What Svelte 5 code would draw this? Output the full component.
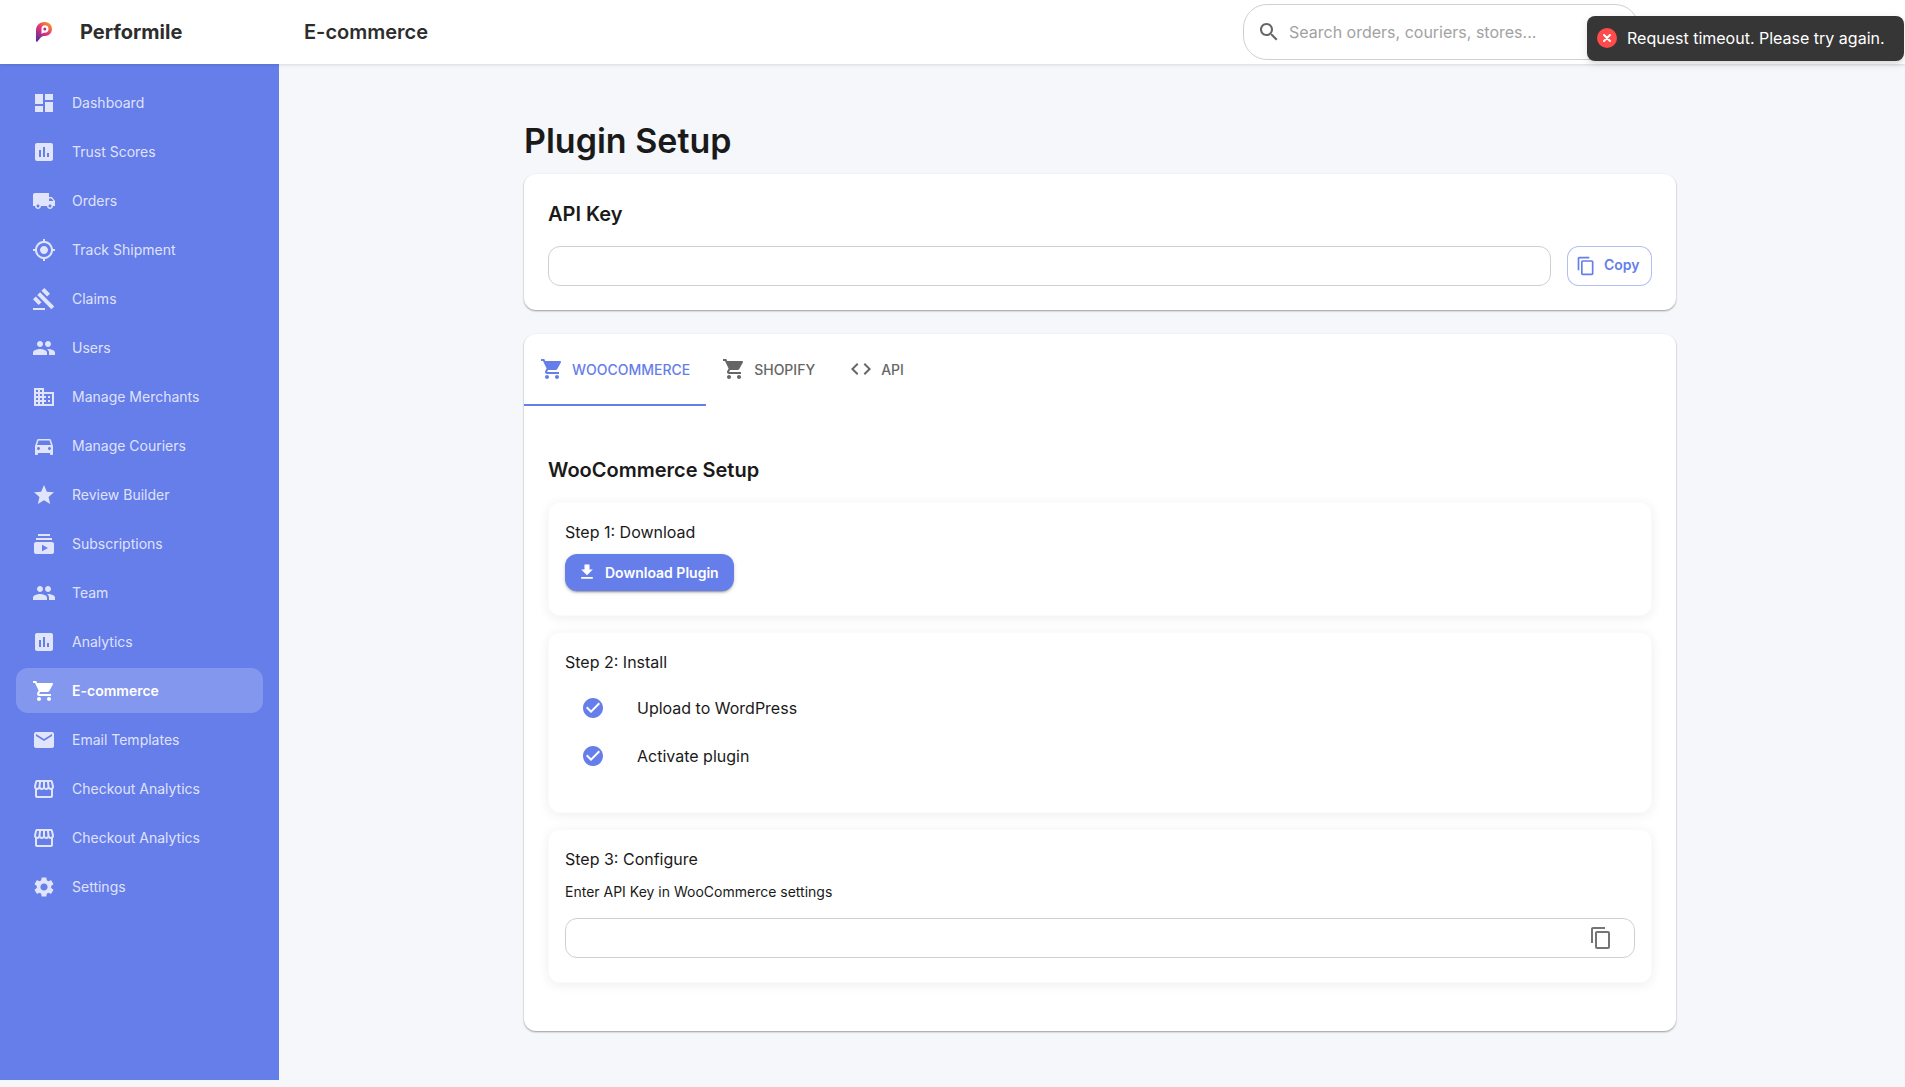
<script>
  const P = {
    dashboard: 'M3 13h8V3H3v10zm0 8h8v-6H3v6zm10 0h8V11h-8v10zm0-18v6h8V3h-8z',
    bar: 'M19 3H5c-1.1 0-2 .9-2 2v14c0 1.1.9 2 2 2h14c1.1 0 2-.9 2-2V5c0-1.1-.9-2-2-2zM9 17H7v-7h2v7zm4 0h-2V7h2v10zm4 0h-2v-4h2v4z',
    truck: 'M20 8h-3V4H3c-1.1 0-2 .9-2 2v11h2c0 1.66 1.34 3 3 3s3-1.34 3-3h6c0 1.66 1.34 3 3 3s3-1.34 3-3h2v-5l-3-4zM6 18.5c-.83 0-1.5-.67-1.5-1.5s.67-1.5 1.5-1.5 1.5.67 1.5 1.5-.67 1.5-1.5 1.5zm13.5-9 1.96 2.5H17V9.5h2.5zm-1.5 9c-.83 0-1.5-.67-1.5-1.5s.67-1.5 1.5-1.5 1.5.67 1.5 1.5-.67 1.5-1.5 1.5z',
    track: 'M12 8c-2.21 0-4 1.79-4 4s1.79 4 4 4 4-1.79 4-4-1.79-4-4-4zm8.94 3c-.46-4.17-3.77-7.48-7.94-7.94V1h-2v2.06C6.83 3.52 3.52 6.83 3.06 11H1v2h2.06c.46 4.17 3.77 7.48 7.94 7.94V23h2v-2.06c4.17-.46 7.48-3.77 7.94-7.94H23v-2h-2.06zM12 19c-3.87 0-7-3.13-7-7s3.13-7 7-7 7 3.13 7 7-3.13 7-7 7z',
    gavel: 'M1 21h12v2H1v-2zM5.245 8.07l2.83-2.827 14.14 14.142-2.828 2.828L5.245 8.07zM12.317 1l5.657 5.656-2.83 2.83-5.654-5.66L12.317 1zM3.825 9.485l5.657 5.657-2.828 2.828-5.657-5.657 2.828-2.828z',
    people: 'M16 11c1.66 0 2.99-1.34 2.99-3S17.66 5 16 5c-1.66 0-3 1.34-3 3s1.34 3 3 3zm-8 0c1.66 0 2.99-1.34 2.99-3S9.66 5 8 5C6.34 5 5 6.34 5 8s1.34 3 3 3zm0 2c-2.33 0-7 1.17-7 3.5V19h14v-2.5c0-2.33-4.67-3.5-7-3.5zm8 0c-.29 0-.62.02-.97.05 1.16.84 1.97 1.97 1.97 3.45V19h6v-2.5c0-2.33-4.67-3.5-7-3.5z',
    business: 'M12 7V3H2v18h20V7H12zM6 19H4v-2h2v2zm0-4H4v-2h2v2zm0-4H4V9h2v2zm0-4H4V5h2v2zm4 12H8v-2h2v2zm0-4H8v-2h2v2zm0-4H8V9h2v2zm0-4H8V5h2v2zm10 12h-8v-2h2v-2h-2v-2h2v-2h-2V9h8v10zm-2-8h-2v2h2v-2zm0 4h-2v2h2v-2z',
    car: 'M18.92 6.01C18.72 5.42 18.16 5 17.5 5h-11c-.66 0-1.21.42-1.42 1.01L3 12v8c0 .55.45 1 1 1h1c.55 0 1-.45 1-1v-1h12v1c0 .55.45 1 1 1h1c.55 0 1-.45 1-1v-8l-2.08-5.99zM6.5 16c-.83 0-1.5-.67-1.5-1.5S5.67 13 6.5 13s1.5.67 1.5 1.5S7.33 16 6.5 16zm11 0c-.83 0-1.5-.67-1.5-1.5s.67-1.5 1.5-1.5 1.5.67 1.5 1.5-.67 1.5-1.5 1.5zM5 11l1.5-4.5h11L19 11H5z',
    star: 'M12 17.27 18.18 21l-1.64-7.03L22 9.24l-7.19-.61L12 2 9.19 8.63 2 9.24l5.46 4.73L5.82 21z',
    subs: 'M20 8H4V6h16v2zm-2-6H6v2h12V2zm4 10v8c0 1.1-.9 2-2 2H4c-1.1 0-2-.9-2-2v-8c0-1.1.9-2 2-2h16c1.1 0 2 .9 2 2zm-6 4-6-3.27v6.53L16 16z',
    cart: 'M7 18c-1.1 0-1.99.9-1.99 2S5.9 22 7 22s2-.9 2-2-.9-2-2-2zM1 2v2h2l3.6 7.59-1.35 2.45c-.16.28-.25.61-.25.96 0 1.1.9 2 2 2h12v-2H7.42c-.14 0-.25-.11-.25-.25l.03-.12.9-1.63h7.45c.75 0 1.41-.41 1.75-1.03l3.58-6.49c.08-.14.12-.31.12-.48 0-.55-.45-1-1-1H5.21l-.94-2H1zm16 16c-1.1 0-1.99.9-1.99 2s.89 2 1.99 2 2-.9 2-2-.9-2-2-2z',
    email: 'M20 4H4c-1.1 0-1.99.9-1.99 2L2 18c0 1.1.9 2 2 2h16c1.1 0 2-.9 2-2V6c0-1.1-.9-2-2-2zm0 4-8 5-8-5V6l8 5 8-5v2z',
    store: 'M21.9 8.89l-1.05-4.37c-.22-.9-1-1.52-1.91-1.52H5.05c-.9 0-1.69.63-1.9 1.52L2.1 8.89c-.24 1.02-.02 2.06.62 2.88.08.11.19.19.28.29V19c0 1.1.9 2 2 2h14c1.1 0 2-.9 2-2v-6.94c.09-.09.2-.18.28-.28.64-.82.87-1.87.62-2.89zm-2.99-3.9 1.05 4.37c.1.42.01.84-.25 1.17-.14.18-.44.47-.94.47-.61 0-1.14-.49-1.21-1.14L16.98 5l1.93-.01zM13 5h1.96l.54 4.52c.05.39-.07.78-.33 1.07-.22.26-.54.41-.95.41-.67 0-1.22-.59-1.22-1.31V5zM8.49 9.52 9.04 5H11v4.69c0 .72-.55 1.31-1.29 1.31-.34 0-.65-.15-.89-.41-.25-.29-.37-.68-.33-1.07zm-4.45-.16L5.05 5h1.97l-.58 4.86c-.08.65-.6 1.14-1.21 1.14-.49 0-.8-.29-.93-.47-.27-.32-.36-.75-.26-1.17zM5 19v-6.03c.08.01.15.03.23.03.87 0 1.66-.36 2.24-.95.6.6 1.4.95 2.31.95.87 0 1.65-.36 2.23-.93.59.57 1.39.93 2.29.93.84 0 1.64-.35 2.24-.95.58.59 1.37.95 2.24.95.08 0 .15-.02.23-.03V19H5z',
    gear: 'M19.14 12.94c.04-.3.06-.61.06-.94 0-.32-.02-.64-.07-.94l2.03-1.58c.18-.14.23-.41.12-.61l-1.92-3.32c-.12-.22-.37-.29-.59-.22l-2.39.96c-.5-.38-1.03-.7-1.62-.94l-.36-2.54c-.04-.24-.24-.41-.48-.41h-3.84c-.24 0-.43.17-.47.41l-.36 2.54c-.59.24-1.13.57-1.62.94l-2.39-.96c-.22-.08-.47 0-.59.22L2.74 8.87c-.12.21-.08.47.12.61l2.03 1.58c-.05.3-.09.63-.09.94s.02.64.07.94l-2.03 1.58c-.18.14-.23.41-.12.61l1.92 3.32c.12.22.37.29.59.22l2.39-.96c.5.38 1.03.7 1.62.94l.36 2.54c.05.24.24.41.48.41h3.84c.24 0 .44-.17.47-.41l.36-2.54c.59-.24 1.13-.56 1.62-.94l2.39.96c.22.08.47 0 .59-.22l1.92-3.32c.12-.22.07-.47-.12-.61l-2.01-1.58zM12 15.6c-1.98 0-3.6-1.62-3.6-3.6s1.62-3.6 3.6-3.6 3.6 1.62 3.6 3.6-1.62 3.6-3.6 3.6z',
    search: 'M15.5 14h-.79l-.28-.27C15.41 12.59 16 11.11 16 9.5 16 5.91 13.09 3 9.5 3S3 5.91 3 9.5 5.91 16 9.5 16c1.61 0 3.09-.59 4.23-1.57l.27.28v.79l5 4.99L20.49 19l-4.99-5zm-6 0C7.01 14 5 11.99 5 9.5S7.01 5 9.5 5 14 7.01 14 9.5 11.99 14 9.5 14z',
    copy: 'M16 1H4c-1.1 0-2 .9-2 2v14h2V3h12V1zm3 4H8c-1.1 0-2 .9-2 2v14c0 1.1.9 2 2 2h11c1.1 0 2-.9 2-2V7c0-1.1-.9-2-2-2zm0 16H8V7h11v14z',
    code: 'M9.4 16.6 4.8 12l4.6-4.6L8 6l-6 6 6 6 1.4-1.4zm5.2 0 4.6-4.6-4.6-4.6L16 6l6 6-6 6-1.4-1.4z',
    download: 'M19 9h-4V3H9v6H5l7 7 7-7zM5 18v2h14v-2H5z',
    check: 'M12 2C6.48 2 2 6.48 2 12s4.48 10 10 10 10-4.48 10-10S17.52 2 12 2zm-2 15-5-5 1.41-1.41L10 14.17l7.59-7.59L19 8l-9 9z'
  };

  const nav = [
    ['Dashboard', P.dashboard], ['Trust Scores', P.bar], ['Orders', P.truck], ['Track Shipment', P.track],
    ['Claims', P.gavel], ['Users', P.people], ['Manage Merchants', P.business], ['Manage Couriers', P.car],
    ['Review Builder', P.star], ['Subscriptions', P.subs], ['Team', P.people], ['Analytics', P.bar],
    ['E-commerce', P.cart], ['Email Templates', P.email], ['Checkout Analytics', P.store],
    ['Checkout Analytics', P.store], ['Settings', P.gear]
  ];
  const tabs = [['WooCommerce', P.cart], ['Shopify', P.cart], ['API', P.code]];
</script>

{#snippet icon(d, cls = '')}
  <svg class="icon {cls}" viewBox="0 0 24 24" aria-hidden="true"><path {d} /></svg>
{/snippet}

<div class="page">
  <header class="appbar">
    <div class="brand">
      <svg class="logo" viewBox="0 0 16 20" aria-hidden="true">
        <defs>
          <linearGradient id="lg" x1="0.8" y1="0" x2="0.15" y2="1">
            <stop offset="0" stop-color="#f79a1d" />
            <stop offset="0.45" stop-color="#e0347a" />
            <stop offset="1" stop-color="#5a2a9e" />
          </linearGradient>
        </defs>
        <path fill="url(#lg)" d="M8.8 0C13 0 16 3 16 7s-3 7-7 7c-1.6 0-3 .3-4.2 1.6L1 20c-.6-.2-1-.6-1-1.4V8.4C0 3.4 3.8 0 8.8 0z" />
        <path fill="#fff" d="M8.8 3.2c2.2 0 3.8 1.700 3.800 3.800s-1.600 3.800-3.800 3.800c-1.100 0-2.300.3-3.300 1.200V7c0-2.100 1.200-3.800 3.300-3.800z" />
        <circle cx="8.800" cy="7" r="1.500" fill="#c2287e" />
      </svg>
      <span class="brand-name">Performile</span>
    </div>
    <div class="page-name">E-commerce</div>
    <div class="search">
      {@render icon(P.search, 'search-icon')}
      <span class="placeholder">Search orders, couriers, stores...</span>
    </div>
  </header>

  <div class="toast">
    <span class="toast-icon"><svg viewBox="0 0 20 20" aria-hidden="true"><path d="M7 7l6 6M13 7l-6 6" /></svg></span>
    <span>Request timeout. Please try again.</span>
  </div>

  <div class="body">
    <aside class="sidebar">
      {#each nav as [label, d]}
        <div class="nav-item" class:active={label === 'E-commerce'}>
          {@render icon(d)}
          <span>{label}</span>
        </div>
      {/each}
    </aside>

    <main class="main">
      <div class="container">
        <h1>Plugin Setup</h1>

        <section class="card api">
          <h2>API Key</h2>
          <div class="key-row">
            <div class="input"></div>
            <button class="copy">{@render icon(P.copy)}Copy</button>
          </div>
        </section>

        <section class="card setup">
          <div class="tabs">
            {#each tabs as [label, d], i}
              <div class="tab" class:selected={i === 0}>
                {@render icon(d)}
                <span>{label}</span>
              </div>
            {/each}
          </div>

          <div class="panel">
            <h2>WooCommerce Setup</h2>

            <div class="step">
              <div class="step-title">Step 1: Download</div>
              <button class="download">{@render icon(P.download, 'small')}Download Plugin</button>
            </div>

            <div class="step">
              <div class="step-title">Step 2: Install</div>
              <ul>
                <li>{@render icon(P.check)}<span>Upload to WordPress</span></li>
                <li>{@render icon(P.check)}<span>Activate plugin</span></li>
              </ul>
            </div>

            <div class="step">
              <div class="step-title">Step 3: Configure</div>
              <p>Enter API Key in WooCommerce settings</p>
              <div class="input with-icon">{@render icon(P.copy)}</div>
            </div>
          </div>
        </section>
      </div>
    </main>
  </div>
</div>

<style>
  :global(body) {
    margin: 0;
    background: #f5f7fa;
    font-family: Inter, "Liberation Sans", sans-serif;
    color: #1a1a1a;
  }
  .page {
    position: relative;
    width: 1905px;
    height: 1087px;
    overflow: hidden;
    background: #f5f7fa;
  }
  .icon {
    width: 24px;
    height: 24px;
    flex: none;
    fill: currentColor;
    display: block;
  }
  .appbar {
    position: relative;
    z-index: 2;
    height: 64px;
    background: #fff;
    display: flex;
    align-items: center;
    box-shadow: 0 1px 3px rgba(0, 0, 0, 0.12);
  }
  .brand {
    width: 304px;
    flex: none;
    display: flex;
    align-items: center;
    padding-left: 36px;
    box-sizing: border-box;
  }
  .logo {
    width: 16px;
    height: 20px;
    margin-right: 28px;
  }
  .brand-name {
    font-size: 20px;
    font-weight: 700;
    color: #2d2d2d;
  }
  .page-name {
    font-size: 20px;
    font-weight: 600;
    color: #2d2d2d;
    flex: 1;
  }
  .search {
    width: 396px;
    height: 56px;
    box-sizing: border-box;
    margin-right: 266px;
    border: 1px solid #d0d0d0;
    border-radius: 24px;
    display: flex;
    align-items: center;
    padding-left: 13px;
    color: #666;
  }
  .placeholder {
    margin-left: 8px;
    font-size: 16px;
    color: #a2a2a2;
  }
  .toast {
    position: absolute;
    z-index: 3;
    top: 16px;
    right: 1px;
    width: 317px;
    height: 45px;
    box-sizing: border-box;
    padding: 0 0 1px 10px;
    display: flex;
    align-items: center;
    gap: 10px;
    background: #363636;
    color: #fff;
    font-size: 16px;
    border-radius: 8px;
    box-shadow: 0 3px 10px rgba(0, 0, 0, 0.1), 0 3px 3px rgba(0, 0, 0, 0.05);
    white-space: nowrap;
  }
  .toast-icon {
    width: 20px;
    height: 20px;
    border-radius: 50%;
    background: #ff4b4b;
    flex: none;
  }
  .toast-icon svg {
    display: block;
    fill: none;
    stroke: #fff;
    stroke-width: 2;
    stroke-linecap: round;
  }
  .body {
    display: flex;
    align-items: flex-start;
  }
  .sidebar {
    width: 279px;
    height: 1016px;
    flex: none;
    box-sizing: border-box;
    background: #667eea;
    padding: 16px 16px 0;
    color: rgba(255, 255, 255, 0.8);
    font-size: 14px;
    font-weight: 400;
  }
  .nav-item {
    height: 45px;
    margin-bottom: 4px;
    border-radius: 12px;
    padding-left: 16px;
    display: flex;
    align-items: center;
    gap: 16px;
    box-sizing: border-box;
  }
  .nav-item.active {
    background: rgba(255, 255, 255, 0.2);
    color: #fff;
    font-weight: 600;
  }
  .main {
    flex: 1;
    display: flex;
    justify-content: center;
    padding-left: 16px;
    min-width: 0;
  }
  .container {
    width: 1152px;
    flex: none;
    padding-top: 52px;
  }
  h1 {
    margin: 0 0 8px;
    font-size: 34px;
    font-weight: 600;
    line-height: 50px;
    color: #1a1a1a;
  }
  h2 {
    margin: 0;
    font-size: 20px;
    font-weight: 600;
    line-height: 32px;
    color: #1a1a1a;
  }
  .card {
    background: #fff;
    border-radius: 12px;
    box-shadow: 0 1px 2px rgba(0, 0, 0, 0.38);
    box-sizing: border-box;
  }
  .api {
    height: 136px;
    padding: 24px;
    margin-bottom: 24px;
  }
  .key-row {
    display: flex;
    gap: 16px;
    margin-top: 16px;
  }
  .input {
    flex: 1;
    height: 40px;
    box-sizing: border-box;
    border: 1px solid #cfcfcf;
    border-radius: 12px;
    background: #fff;
  }
  .copy {
    width: 85px;
    height: 40px;
    box-sizing: border-box;
    padding: 0 0 2px 8px;
    display: flex;
    align-items: center;
    gap: 8px;
    font: 600 14px/24px Inter, "Liberation Sans", sans-serif;
    color: #667eea;
    background: #fff;
    border: 1px solid rgba(102, 126, 234, 0.5);
    border-radius: 12px;
  }
  .copy .icon {
    width: 20px;
    height: 20px;
    margin-top: 1px;
  }
  .setup {
    height: 697px;
  }
  .tabs {
    display: flex;
    height: 72px;
  }
  .tab {
    padding: 0 16px 2px;
    display: flex;
    align-items: center;
    gap: 8px;
    font-size: 14px;
    font-weight: 500;
    text-transform: uppercase;
    color: #666;
    box-sizing: border-box;
  }
  .tab:nth-child(3) {
    margin-left: 2px;
  }
  .tab.selected {
    color: #667eea;
    border-bottom: 2px solid #667eea;
    padding-bottom: 0;
  }
  .panel {
    padding: 48px 24px 0;
  }
  .panel h2 {
    margin-bottom: 16px;
  }
  .step {
    background: #fff;
    border: 1px solid rgba(0, 0, 0, 0.015);
    border-radius: 12px;
    box-shadow: 0 2px 12px rgba(0, 0, 0, 0.07);
    padding: 15px 16px 24px;
    margin-bottom: 16px;
    box-sizing: border-box;
  }
  .step-title {
    font-size: 16px;
    line-height: 28px;
    color: #1a1a1a;
  }
  .download {
    margin-top: 8px;
    width: 169px;
    height: 37px;
    display: flex;
    align-items: center;
    gap: 8px;
    padding: 0 0 1px 12px;
    box-sizing: border-box;
    border: none;
    border-radius: 12px;
    background: #667eea;
    color: #fff;
    font: 600 14px Inter, "Liberation Sans", sans-serif;
    box-shadow: 0 3px 1px -2px rgba(0, 0, 0, 0.2), 0 2px 2px rgba(0, 0, 0, 0.14), 0 1px 5px rgba(0, 0, 0, 0.12);
  }
  .download .small {
    width: 20px;
    height: 20px;
  }
  ul {
    list-style: none;
    margin: 0;
    padding: 8px 0;
  }
  li {
    height: 48px;
    display: flex;
    align-items: center;
    padding-left: 16px;
    font-size: 16px;
    color: #1a1a1a;
  }
  li .icon {
    color: #667eea;
    margin-right: 32px;
  }
  p {
    margin: 8px 0 16px;
    font-size: 14px;
    line-height: 21px;
    color: #1a1a1a;
  }
  .with-icon {
    display: flex;
    align-items: center;
    justify-content: flex-end;
    padding-right: 21px;
    color: #757575;
    flex: none;
  }
</style>
